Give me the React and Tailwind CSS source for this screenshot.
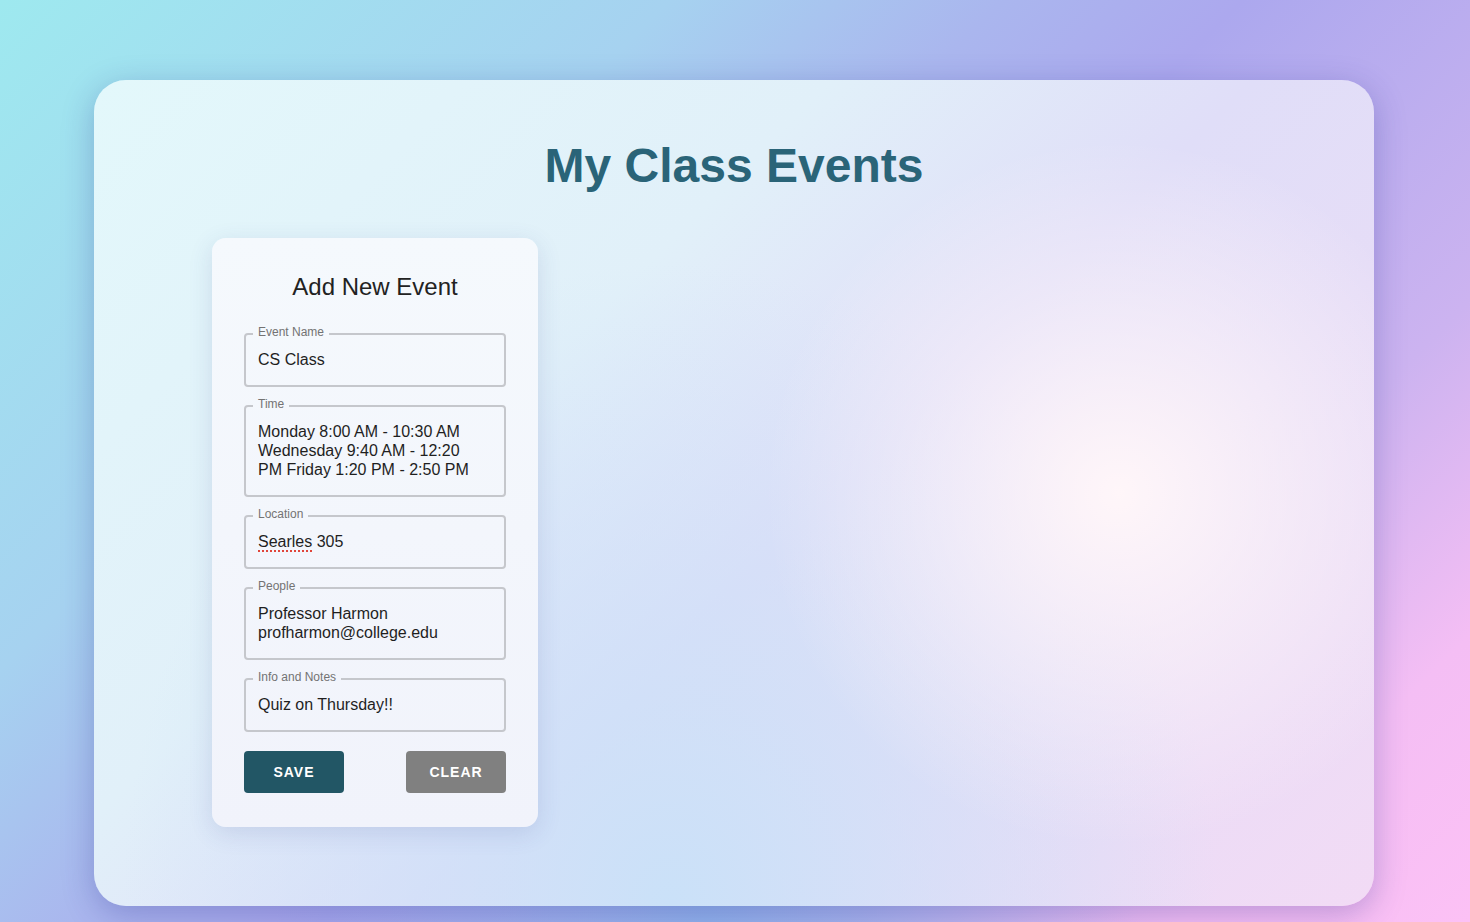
import React from 'react';

// Campo con borde "notched" (fieldset + legend), como el outlined input
const Field = ({ label, children }) => (
    <fieldset className="w-full border-2 border-[#c5c7cc] rounded-[4px] pl-[7px] pr-[12px] pt-[7px] pb-[16px]">
        <legend className="px-[5px] pb-[4px] text-[12px] leading-[14px] text-[#737373]">{label}</legend>
        <div className="px-[5px] text-[16px] leading-[19px] text-[#1f1f1f]">{children}</div>
    </fieldset>
);

export default function App() {
    return (
        <div className="min-h-[922px] w-full font-['Liberation_Sans',Arial,sans-serif] bg-[radial-gradient(ellipse_at_48%_100%,rgba(130,180,235,0.75)_0%,rgba(130,180,235,0)_40%),linear-gradient(135deg,#9ee9ef_0%,#a6d2f0_28%,#aab6ee_42%,#aca8ee_52%,#ccb3f0_74%,#f4bef4_88%,#fcc1f5_100%)] pt-[80px] pb-[16px]">
            <div className="ml-[94px] w-[1280px] h-[826px] rounded-[32px] shadow-[0_8px_32px_rgba(31,38,135,0.28)] bg-[radial-gradient(circle_at_80%_50%,rgba(255,246,249,1)_0%,rgba(255,246,249,0)_32%),radial-gradient(ellipse_at_45%_100%,rgba(202,225,248,1)_0%,rgba(202,225,248,0)_55%),linear-gradient(135deg,#e3f8fb_0%,#e1f0f9_35%,#e0def8_55%,#f2dbf5_100%)] pt-[62px]">
                <h1 className="text-center text-[48px] leading-[48px] font-bold text-[#2a6478]">My Class Events</h1>

                <div className="mt-[48px] pl-[118px]">
                    {/* Tarjeta del formulario */}
                    <div className="w-[326px] rounded-[14px] bg-[linear-gradient(180deg,#f5f9fd_0%,#f1f3fb_100%)] shadow-[0_6px_24px_rgba(60,70,140,0.14)] px-8 pt-[35px] pb-[34px]">
                        <h2 className="text-center text-[24px] leading-[28px] text-[#222]">Add New Event</h2>

                        <div className="mt-[24px] flex flex-col gap-[10px]">
                            <Field label="Event Name">CS Class</Field>
                            <Field label="Time">
                                Monday 8:00 AM - 10:30 AM<br />
                                Wednesday 9:40 AM - 12:20<br />
                                PM Friday 1:20 PM - 2:50 PM
                            </Field>
                            <Field label="Location">
                                <span className="underline decoration-dotted decoration-2 decoration-[#e0453a] underline-offset-[3px]">Searles</span> 305
                            </Field>
                            <Field label="People">
                                Professor Harmon<br />
                                profharmon@college.edu
                            </Field>
                            <Field label="Info and Notes">Quiz on Thursday!!</Field>
                        </div>

                        <div className="mt-[19px] flex justify-between">
                            <button className="h-[42px] w-[100px] rounded-[4px] bg-[#225665] text-white text-[14px] font-bold tracking-[1px]">SAVE</button>
                            <button className="h-[42px] w-[100px] rounded-[4px] bg-[#808080] text-white text-[14px] font-bold tracking-[1px]">CLEAR</button>
                        </div>
                    </div>
                </div>
            </div>
        </div>
    );
}
